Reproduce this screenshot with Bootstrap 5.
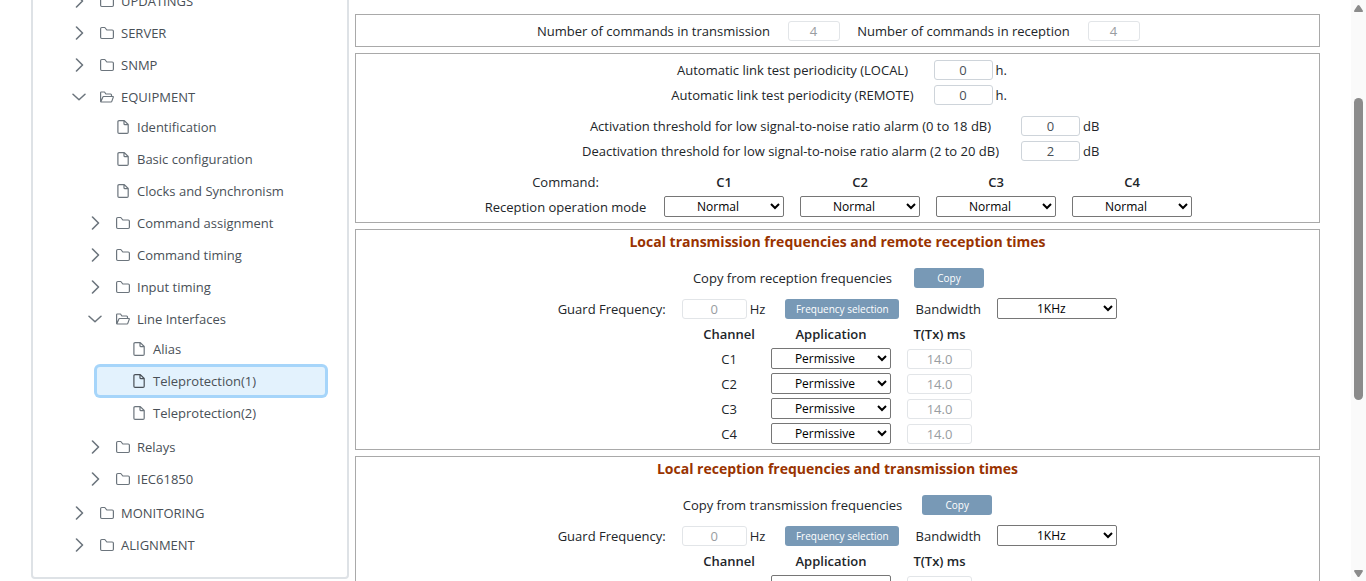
<!DOCTYPE html>
<html lang="en">
<head>
<meta charset="utf-8">
<meta name="viewport" content="width=device-width, initial-scale=1">
<title>Teleprotection(1)</title>
<link href="https://cdn.jsdelivr.net/npm/bootstrap@5.3.0/dist/css/bootstrap.min.css" rel="stylesheet">
<style>
  body { font-family: "Open Sans", "Noto Sans", sans-serif; font-size: 13px; line-height: 20px; color: #212529; }
  .screen { height: 100vh; overflow: hidden; }
  .side { flex: 0 0 318px; margin-top: -80px; padding: 63px 22px 16px 32px; border: 2px solid #dee2e6; border-radius: 4px; }
  .tree, .tree ul { list-style: none; margin: 0; padding: 0; }
  .tree ul { padding-left: 16px; }
  .tree li { padding: 2px 0; }
  .node { height: 28px; border-radius: 3px; color: #495057; }
  .node a { color: inherit; text-decoration: none; white-space: nowrap; gap: 7px; }
  .node svg { width: 14px; height: 14px; color: #6c757d; }
  .toggler { width: 28px; height: 28px; margin-right: 7px; padding: 0; border: 0; background: none; }
  .leaf { padding-left: 35px; }
  .node.current { background: #e3f2fd; box-shadow: 0 0 0 3px #a6d5fa; }
  .node.current svg { color: #495057; }

  .shell { padding: 0 31px; gap: 6px; }
  .stack { gap: 6px; padding-top: 14px; }
  .box { border: 1px solid #a9a9a9; flex: none; }
  .box label { white-space: nowrap; text-align: center; }
  .box input { height: 20px; padding: 0; border: 1px solid #ced4da; border-radius: 3px; background: #fff; color: #495057; text-align: center; width: 65px; display: block; }
  .box input:disabled { border-color: #e2e5e8; color: #999da1; }
  .box input.count { width: 52px; }
  .box input.num { width: 59px; }
  .box select { width: 120px; height: 21px; padding: 0; border: 1px solid #767676; border-radius: 2px; background: #fff; color: #000; font-size: 12px; text-align: center; display: block; }
  .counts { gap: 16px; padding: 6px 0 5px; }
  .counts label:first-child { min-width: 236px; }
  .counts label { min-width: 216px; }
  .pair { display: grid; row-gap: 5px; column-gap: 3px; justify-content: center; align-items: center; text-align: center; }
  .pair label { margin-right: 13px; }
  .hours { grid-template-columns: 263px 59px 12px; padding-top: 6px; }
  .level { grid-template-columns: 442px 59px 16px; padding-top: 11px; }
  .grid-table { margin: 0 auto; text-align: center; border-collapse: collapse; }
  .grid-table th, .grid-table td { height: 25px; padding: 0 8px; }
  .grid-table th { font-weight: 600; }
  .grid-table th.plain { font-weight: 400; }
  .modes { margin-top: 8px; margin-bottom: 3px; }
  .modes th:first-child { width: 181px; }
  .channels { margin-bottom: 3px; }
  .channels th:first-child { width: 68px; }
  .heading { margin: 0; padding-top: 2px; font-size: 14px; line-height: 20px; font-weight: 700; color: #993300; text-align: center; }
  .copyrow { gap: 20px; margin-top: 16px; }
  .copyrow .from { min-width: 203px; text-align: center; }
  .guard { gap: 16px; height: 21px; margin-top: 10px; margin-bottom: 2px; }
  .guard label { min-width: 66px; }
  .act { height: 20px; padding: 0; border: 0; border-radius: 3px; background: #7899b6; color: #fff; font-size: 10px; line-height: 20px; font-weight: 500; }
  .act.short { width: 70px; }
  .act.long { width: 114px; margin-left: 4px; }
  .hz { gap: 3px; }

  .rail { width: 15px; background: #fafafa; padding: 5px 3px 4px; flex: none; }
  .rail svg { width: 9px; height: 7px; fill: #8b8b8b; display: block; flex: none; }
  .rail .before { flex: 86; }
  .rail .thumb { flex: 302; background: #8b8b8b; border-radius: 5px; }
  .rail .after { flex: 170; }
</style>
</head>
<body>
<svg class="d-none" aria-hidden="true">
  <symbol id="right" viewBox="0 0 14 14"><path d="M4.500 1l6 6-6 6" fill="none" stroke="currentColor" stroke-width="1.600" stroke-linecap="round" stroke-linejoin="round"/></symbol>
  <symbol id="down" viewBox="0 0 14 14"><path d="M1 4.200l6 5.600 6-5.600" fill="none" stroke="currentColor" stroke-width="1.500" stroke-linecap="round" stroke-linejoin="round"/></symbol>
  <symbol id="folder" viewBox="0 0 14 14"><path d="M.6 11.300V2.700q0-1.200 1.200-1.200h3L6.800 4h5.400q1.200 0 1.200 1.200v6.100q0 1.200-1.200 1.200H1.800q-1.200 0-1.200-1.200z" fill="none" stroke="currentColor" stroke-width="1.200" stroke-linejoin="round"/></symbol>
  <symbol id="open" viewBox="0 0 14 14"><path d="M.6 11.500V2.700q0-.7.7-.7h3.200l1.400 2h4.700q.9 0 .9.900v1.600M.7 11.900l2.200-5q.2-.4.6-.4h9.300q.7 0 .5.600l-1.500 4.300q-.2.600-.8.600H1.200q-.6 0-.6-.5" fill="none" stroke="currentColor" stroke-width="1.200" stroke-linejoin="round"/></symbol>
  <symbol id="file" viewBox="0 0 14 14"><path d="M8.300.6H3.100Q1.900.6 1.900 1.800v10.400q0 1.200 1.200 1.200h7.900q1.200 0 1.200-1.200V4.500zM8 .7v3q0 1 1 1h3.100" fill="none" stroke="currentColor" stroke-width="1.200" stroke-linejoin="round"/></symbol>
</svg>

<div class="screen d-flex">
  <div class="shell d-flex flex-grow-1 align-items-start">
    <nav class="side" aria-label="Sections">
      <ul class="tree">
        <li><div class="node d-flex align-items-center"><button class="toggler d-flex align-items-center justify-content-center" aria-label="Expand"><svg><use href="#right"/></svg></button><a href="#" class="d-flex align-items-center"><svg><use href="#folder"/></svg>UPDATINGS</a></div></li>
        <li><div class="node d-flex align-items-center"><button class="toggler d-flex align-items-center justify-content-center" aria-label="Expand"><svg><use href="#right"/></svg></button><a href="#" class="d-flex align-items-center"><svg><use href="#folder"/></svg>SERVER</a></div></li>
        <li><div class="node d-flex align-items-center"><button class="toggler d-flex align-items-center justify-content-center" aria-label="Expand"><svg><use href="#right"/></svg></button><a href="#" class="d-flex align-items-center"><svg><use href="#folder"/></svg>SNMP</a></div></li>
        <li><div class="node d-flex align-items-center"><button class="toggler d-flex align-items-center justify-content-center" aria-label="Collapse"><svg><use href="#down"/></svg></button><a href="#" class="d-flex align-items-center"><svg><use href="#open"/></svg>EQUIPMENT</a></div>
          <ul>
            <li><div class="node leaf d-flex align-items-center"><a href="#" class="d-flex align-items-center"><svg><use href="#file"/></svg>Identification</a></div></li>
            <li><div class="node leaf d-flex align-items-center"><a href="#" class="d-flex align-items-center"><svg><use href="#file"/></svg>Basic configuration</a></div></li>
            <li><div class="node leaf d-flex align-items-center"><a href="#" class="d-flex align-items-center"><svg><use href="#file"/></svg>Clocks and Synchronism</a></div></li>
            <li><div class="node d-flex align-items-center"><button class="toggler d-flex align-items-center justify-content-center" aria-label="Expand"><svg><use href="#right"/></svg></button><a href="#" class="d-flex align-items-center"><svg><use href="#folder"/></svg>Command assignment</a></div></li>
            <li><div class="node d-flex align-items-center"><button class="toggler d-flex align-items-center justify-content-center" aria-label="Expand"><svg><use href="#right"/></svg></button><a href="#" class="d-flex align-items-center"><svg><use href="#folder"/></svg>Command timing</a></div></li>
            <li><div class="node d-flex align-items-center"><button class="toggler d-flex align-items-center justify-content-center" aria-label="Expand"><svg><use href="#right"/></svg></button><a href="#" class="d-flex align-items-center"><svg><use href="#folder"/></svg>Input timing</a></div></li>
            <li><div class="node d-flex align-items-center"><button class="toggler d-flex align-items-center justify-content-center" aria-label="Collapse"><svg><use href="#down"/></svg></button><a href="#" class="d-flex align-items-center"><svg><use href="#open"/></svg>Line Interfaces</a></div>
              <ul>
                <li><div class="node leaf d-flex align-items-center"><a href="#" class="d-flex align-items-center"><svg><use href="#file"/></svg>Alias</a></div></li>
                <li><div class="node leaf current d-flex align-items-center"><a href="#" aria-current="page" class="d-flex align-items-center"><svg><use href="#file"/></svg>Teleprotection(1)</a></div></li>
                <li><div class="node leaf d-flex align-items-center"><a href="#" class="d-flex align-items-center"><svg><use href="#file"/></svg>Teleprotection(2)</a></div></li>
              </ul>
            </li>
            <li><div class="node d-flex align-items-center"><button class="toggler d-flex align-items-center justify-content-center" aria-label="Expand"><svg><use href="#right"/></svg></button><a href="#" class="d-flex align-items-center"><svg><use href="#folder"/></svg>Relays</a></div></li>
            <li><div class="node d-flex align-items-center"><button class="toggler d-flex align-items-center justify-content-center" aria-label="Expand"><svg><use href="#right"/></svg></button><a href="#" class="d-flex align-items-center"><svg><use href="#folder"/></svg>IEC61850</a></div></li>
          </ul>
        </li>
        <li><div class="node d-flex align-items-center"><button class="toggler d-flex align-items-center justify-content-center" aria-label="Expand"><svg><use href="#right"/></svg></button><a href="#" class="d-flex align-items-center"><svg><use href="#folder"/></svg>MONITORING</a></div></li>
        <li><div class="node d-flex align-items-center"><button class="toggler d-flex align-items-center justify-content-center" aria-label="Expand"><svg><use href="#right"/></svg></button><a href="#" class="d-flex align-items-center"><svg><use href="#folder"/></svg>ALIGNMENT</a></div></li>
      </ul>
    </nav>

    <main class="stack d-flex flex-column flex-grow-1">
      <section class="box counts d-flex justify-content-center align-items-center">
        <label for="ntx">Number of commands in transmission</label><input id="ntx" class="count" value="4" disabled>
        <label for="nrx">Number of commands in reception</label><input id="nrx" class="count" value="4" disabled>
      </section>

      <section class="box">
        <div class="pair hours">
          <label for="tl">Automatic link test periodicity (LOCAL)</label><input id="tl" class="num" value="0"><span class="text-start">h.</span>
          <label for="tr">Automatic link test periodicity (REMOTE)</label><input id="tr" class="num" value="0"><span class="text-start">h.</span>
        </div>
        <div class="pair level">
          <label for="ta">Activation threshold for low signal-to-noise ratio alarm (0 to 18 dB)</label><input id="ta" class="num" value="0"><span class="text-start">dB</span>
          <label for="td">Deactivation threshold for low signal-to-noise ratio alarm (2 to 20 dB)</label><input id="td" class="num" value="2"><span class="text-start">dB</span>
        </div>
        <table class="grid-table modes">
          <tr><th class="plain">Command:</th><th>C1</th><th>C2</th><th>C3</th><th>C4</th></tr>
          <tr><th class="plain text-nowrap">Reception operation mode</th>
            <td><select aria-label="C1 mode"><option>Normal</option></select></td>
            <td><select aria-label="C2 mode"><option>Normal</option></select></td>
            <td><select aria-label="C3 mode"><option>Normal</option></select></td>
            <td><select aria-label="C4 mode"><option>Normal</option></select></td></tr>
        </table>
      </section>

      <section class="box">
        <h2 class="heading">Local transmission frequencies and remote reception times</h2>
        <div class="copyrow d-flex justify-content-center align-items-center"><span class="from">Copy from reception frequencies</span><button class="act short">Copy</button></div>
        <div class="guard d-flex justify-content-center align-items-center">
          <label for="g1">Guard Frequency:</label>
          <div class="hz d-flex align-items-center"><input id="g1" value="0" disabled><span>Hz</span></div>
          <button class="act long">Frequency selection</button>
          <label for="b1">Bandwidth</label><select id="b1"><option>1KHz</option></select>
        </div>
        <table class="grid-table channels">
          <tr><th>Channel</th><th>Application</th><th class="text-nowrap">T(Tx) ms</th></tr>
          <tr><td>C1</td><td><select aria-label="C1 application"><option>Permissive</option></select></td><td><input aria-label="C1 time" value="14.0" disabled></td></tr>
          <tr><td>C2</td><td><select aria-label="C2 application"><option>Permissive</option></select></td><td><input aria-label="C2 time" value="14.0" disabled></td></tr>
          <tr><td>C3</td><td><select aria-label="C3 application"><option>Permissive</option></select></td><td><input aria-label="C3 time" value="14.0" disabled></td></tr>
          <tr><td>C4</td><td><select aria-label="C4 application"><option>Permissive</option></select></td><td><input aria-label="C4 time" value="14.0" disabled></td></tr>
        </table>
      </section>

      <section class="box">
        <h2 class="heading">Local reception frequencies and transmission times</h2>
        <div class="copyrow d-flex justify-content-center align-items-center"><span class="from">Copy from transmission frequencies</span><button class="act short">Copy</button></div>
        <div class="guard d-flex justify-content-center align-items-center">
          <label for="g2">Guard Frequency:</label>
          <div class="hz d-flex align-items-center"><input id="g2" value="0" disabled><span>Hz</span></div>
          <button class="act long">Frequency selection</button>
          <label for="b2">Bandwidth</label><select id="b2"><option>1KHz</option></select>
        </div>
        <table class="grid-table channels">
          <tr><th>Channel</th><th>Application</th><th class="text-nowrap">T(Tx) ms</th></tr>
          <tr><td></td><td><select aria-label="C1 application"></select></td><td><input aria-label="C1 time" disabled></td></tr>
        </table>
      </section>
    </main>
  </div>

  <div class="rail d-flex flex-column" aria-hidden="true">
    <svg viewBox="0 0 9 7"><path d="M4.500 0q.6 0 1 .6L8.800 5.500Q9.200 7 8 7H1Q-.2 7 .2 5.500L3.500.6q.4-.6 1-.6z"/></svg>
    <div class="before"></div><div class="thumb"></div><div class="after"></div>
    <svg viewBox="0 0 9 7"><path d="M4.500 7q.6 0 1-.6L8.800 1.500Q9.200 0 8 0H1Q-.2 0 .2 1.500l3.300 4.900q.4.600 1 .6z"/></svg>
  </div>
</div>
<script src="https://cdn.jsdelivr.net/npm/bootstrap@5.3.0/dist/js/bootstrap.bundle.min.js"></script>
</body>
</html>
